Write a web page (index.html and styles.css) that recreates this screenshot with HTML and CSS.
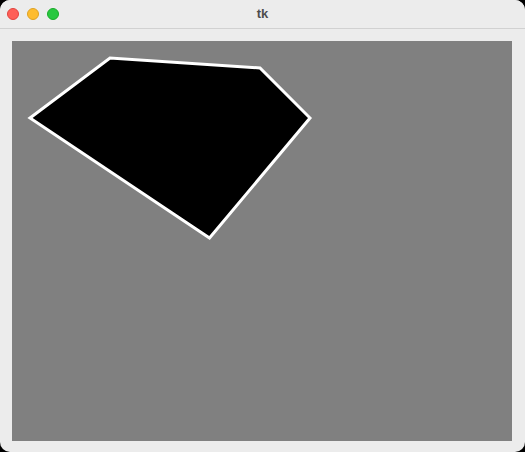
FILE: index.html
```html
<!DOCTYPE html>
<html>
<head>
<meta charset="utf-8">
<link rel="stylesheet" href="styles.css">
</head>
<body>
<div class="window">
  <div class="titlebar">
    <div class="lights">
      <span class="light red"></span>
      <span class="light yellow"></span>
      <span class="light green"></span>
    </div>
    <div class="title">tk</div>
  </div>
  <div class="content">
    <div class="canvas">
      <svg class="drawing" width="500" height="400" viewBox="0 0 500 400">
        <polygon points="18,77 98,17 248,27 298,77 197.5,197" fill="#000" stroke="#fff" stroke-width="3" stroke-linejoin="miter"/>
      </svg>
    </div>
  </div>
</div>
</body>
</html>
```
FILE: styles.css
```css
html, body {
  margin: 0;
  padding: 0;
  width: 525px;
  height: 452px;
  overflow: hidden;
  background: #000;
}
.window {
  width: 525px;
  height: 452px;
  background: #ececec;
  border-radius: 10px;
  overflow: hidden;
  display: flex;
  flex-direction: column;
}
.titlebar {
  height: 28px;
  border-bottom: 1px solid #d1d1d1;
  display: flex;
  align-items: center;
  position: relative;
  background: #ececec;
}
.lights {
  display: flex;
  gap: 8px;
  padding-left: 7px;
}
.light {
  width: 12px;
  height: 12px;
  border-radius: 50%;
  box-sizing: border-box;
}
.red { background: #fe5f57; border: 0.5px solid #e1443e; }
.yellow { background: #febc2e; border: 0.5px solid #dea123; }
.green { background: #28c840; border: 0.5px solid #1aab29; }
.title {
  position: absolute;
  left: 0;
  right: 0;
  top: 0;
  height: 28px;
  line-height: 28px;
  text-align: center;
  font-family: "Liberation Sans", Arial, sans-serif;
  font-weight: bold;
  font-size: 13px;
  color: #4c4c4c;
  padding-left: 0;
}
.content {
  padding: 12px 0 0 12px;
}
.canvas {
  width: 500px;
  height: 400px;
  background: #808080;
}
.drawing {
  display: block;
}
```
